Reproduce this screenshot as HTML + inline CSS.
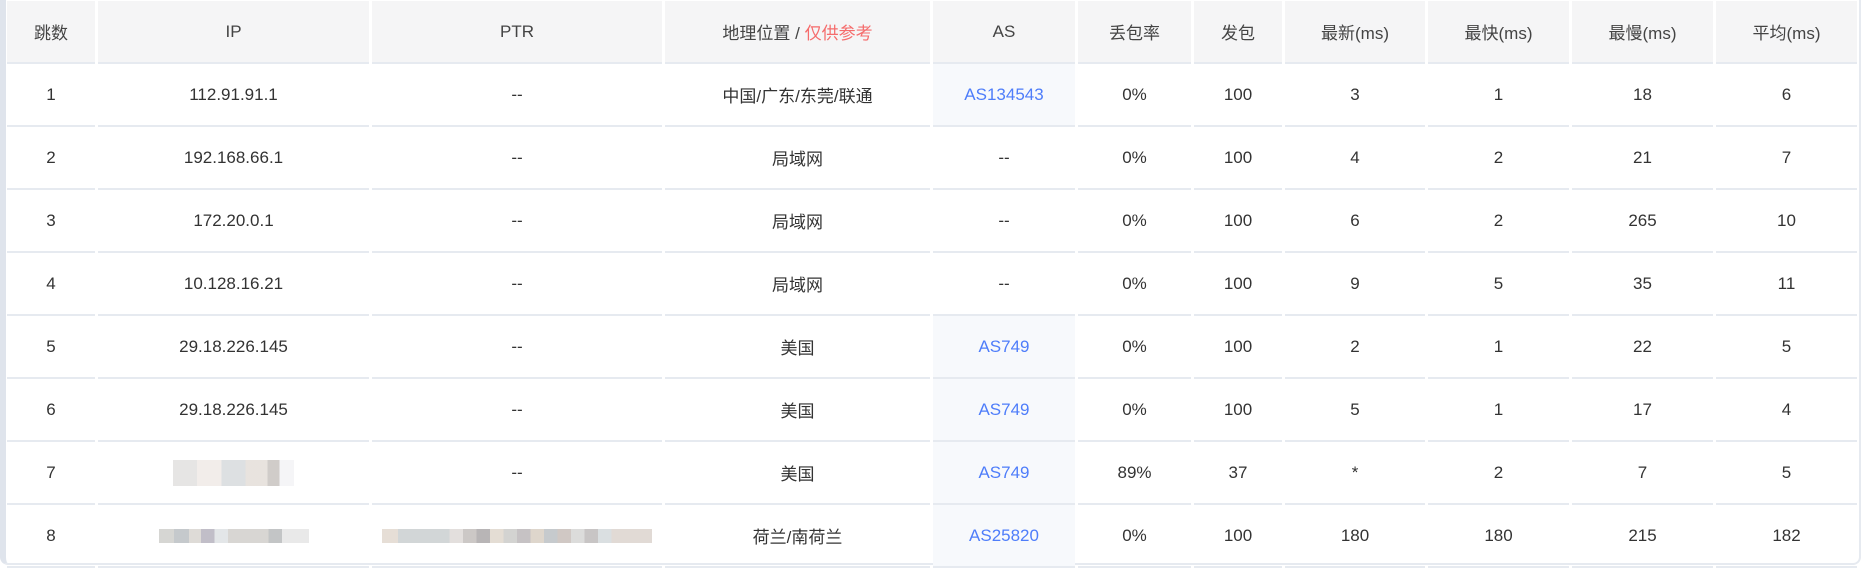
<!DOCTYPE html>
<html><head><meta charset="utf-8"><style>
html,body{margin:0;padding:0;background:#fff;width:1863px;height:567px;overflow:hidden}
.wrap{position:absolute;left:0;top:0;width:1861px;height:565px;border-left:6px solid #dfe4ec;border-right:2px solid #e6eaf0;border-bottom:2px solid #e6eaf0;border-radius:0 0 8px 8px;box-sizing:border-box}
table{position:absolute;left:4px;top:1px;border-collapse:separate;border-spacing:3px 0;font-family:"Liberation Sans","Noto Sans CJK SC",sans-serif;font-size:17px;color:#333;table-layout:fixed}
td,th{text-align:center;border-bottom:2px solid #e6eaf0;padding:0;height:61px;font-weight:normal}
th{background:#f5f5f6;color:#444;font-size:17px}
.red{color:#f56c6c}
.as{background:#f7f9fc;color:#4e7dfa}
.blur{display:inline-block;vertical-align:middle}
</style></head><body>
<div class="wrap"></div>
<table>
<colgroup><col style="width:88px"><col style="width:271px"><col style="width:290px"><col style="width:265px"><col style="width:142px"><col style="width:113px"><col style="width:88px"><col style="width:140px"><col style="width:141px"><col style="width:141px"><col style="width:141px"></colgroup>
<tr><th>跳数</th><th>IP</th><th>PTR</th><th>地理位置 / <span class="red">仅供参考</span></th><th>AS</th><th>丢包率</th><th>发包</th><th>最新(ms)</th><th>最快(ms)</th><th>最慢(ms)</th><th>平均(ms)</th></tr>
<tr><td>1</td><td>112.91.91.1</td><td>--</td><td>中国/广东/东莞/联通</td><td class="as">AS134543</td><td>0%</td><td>100</td><td>3</td><td>1</td><td>18</td><td>6</td></tr>
<tr><td>2</td><td>192.168.66.1</td><td>--</td><td>局域网</td><td>--</td><td>0%</td><td>100</td><td>4</td><td>2</td><td>21</td><td>7</td></tr>
<tr><td>3</td><td>172.20.0.1</td><td>--</td><td>局域网</td><td>--</td><td>0%</td><td>100</td><td>6</td><td>2</td><td>265</td><td>10</td></tr>
<tr><td>4</td><td>10.128.16.21</td><td>--</td><td>局域网</td><td>--</td><td>0%</td><td>100</td><td>9</td><td>5</td><td>35</td><td>11</td></tr>
<tr><td>5</td><td>29.18.226.145</td><td>--</td><td>美国</td><td class="as">AS749</td><td>0%</td><td>100</td><td>2</td><td>1</td><td>22</td><td>5</td></tr>
<tr><td>6</td><td>29.18.226.145</td><td>--</td><td>美国</td><td class="as">AS749</td><td>0%</td><td>100</td><td>5</td><td>1</td><td>17</td><td>4</td></tr>
<tr><td>7</td><td><span class="blur" style="width:121px;height:26px;background:linear-gradient(90deg,#e3e2e1 0 20%,#f0ebe8 20% 40%,#d9dcdf 40% 60%,#e5e0db 60% 78%,#cbc6c3 78% 88%,#f4f4f6 88%);opacity:.9"></span></td><td>--</td><td>美国</td><td class="as">AS749</td><td>89%</td><td>37</td><td>*</td><td>2</td><td>7</td><td>5</td></tr>
<tr><td>8</td><td><span class="blur" style="width:150px;height:14px;background:linear-gradient(90deg,#d6d6d3 0 10%,#c5c9cc 10% 20%,#dedbd7 20% 28%,#c1bec8 28% 37%,#e3e6e8 37% 46%,#d8d6d3 46% 73%,#c3c5c6 73% 82%,#e9e9e9 82%)"></span></td><td><span class="blur" style="width:270px;height:14px;background:linear-gradient(90deg,#e6ded6 0 6%,#d2d6d7 6% 25%,#e3dfdd 25% 30%,#ccc8c6 30% 35%,#b8b5b6 35% 40%,#e4ddd4 40% 45%,#d3d3d1 45% 50%,#c6c2c4 50% 55%,#ded6cc 55% 60%,#c6cacd 60% 65%,#d0c8c4 65% 70%,#dcdcdb 70% 75%,#c8c5c5 75% 80%,#dadfe1 80% 85%,#e1dad5 85%)"></span></td><td>荷兰/南荷兰</td><td class="as">AS25820</td><td>0%</td><td>100</td><td>180</td><td>180</td><td>215</td><td>182</td></tr>
</table>
</body></html>
